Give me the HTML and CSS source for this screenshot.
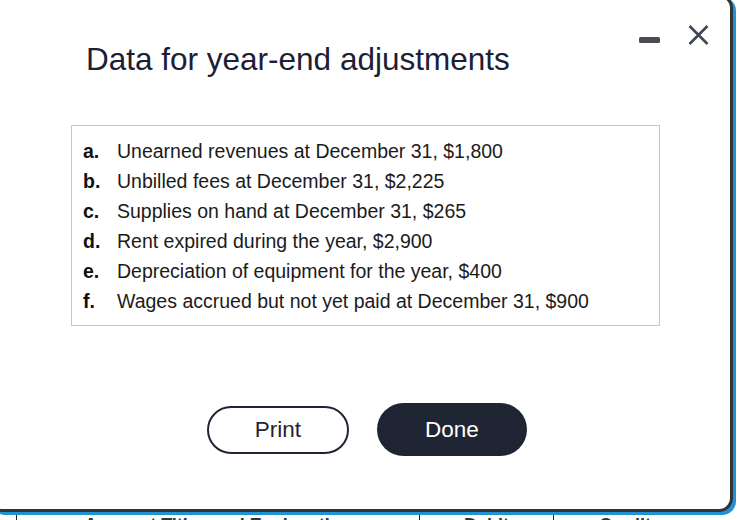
FILE: index.html
```html
<!DOCTYPE html>
<html lang="en">
<head>
<meta charset="utf-8">
<title>Data for year-end adjustments</title>
<link rel="stylesheet" href="styles.css">
</head>
<body>
<div class="dialog">
  <div class="header">
    <h1 class="title">Data for year-end adjustments</h1>
    <div class="controls">
      <button class="ctrl" aria-label="Minimize">
        <svg width="21" height="20" viewBox="0 0 21 20"><rect x="0" y="12" width="21" height="6" rx="1.5" fill="#4a4d52"/></svg>
      </button>
      <button class="ctrl" aria-label="Close">
        <svg width="21" height="20" viewBox="0 0 21 20"><path d="M1.5 1 L19.5 19 M19.5 1 L1.5 19" stroke="#3e4855" stroke-width="2.6" fill="none"/></svg>
      </button>
    </div>
  </div>
  <div class="data-box">
    <ol class="items">
      <li><span class="lbl">a.</span><span>Unearned revenues at December 31, $1,800</span></li>
      <li><span class="lbl">b.</span><span>Unbilled fees at December 31, $2,225</span></li>
      <li><span class="lbl">c.</span><span>Supplies on hand at December 31, $265</span></li>
      <li><span class="lbl">d.</span><span>Rent expired during the year, $2,900</span></li>
      <li><span class="lbl">e.</span><span>Depreciation of equipment for the year, $400</span></li>
      <li><span class="lbl">f.</span><span>Wages accrued but not yet paid at December 31, $900</span></li>
    </ol>
  </div>
  <div class="actions">
    <button class="btn btn-outline">Print</button>
    <button class="btn btn-primary">Done</button>
  </div>
</div>
<div class="table-head">
  <div class="th th-acct">Account Titles and Explanation</div>
  <div class="th th-debit">Debit</div>
  <div class="th th-credit">Credit</div>
</div>
</body>
</html>
```

FILE: styles.css
```css
html, body {
  margin: 0;
  padding: 0;
  background: #ffffff;
}
body {
  width: 742px;
  height: 520px;
  overflow: hidden;
  font-family: "Liberation Sans", Arial, sans-serif;
  color: #1b1b1b;
}
.dialog {
  box-sizing: border-box;
  width: 745px;
  height: 518px;
  margin: -6px 0 0 -12px;
  border: 3px solid #333436;
  border-radius: 14px;
  box-shadow: 3px 3px 0 #1f93d3;
  background: #ffffff;
}
.header {
  display: flex;
  justify-content: space-between;
  align-items: flex-start;
  padding: 28px 21px 0 95px;
}
.title {
  margin: 16px 0 0 0;
  font-size: 31.5px;
  line-height: 36px;
  font-weight: normal;
  color: #1b2036;
}
.controls {
  display: flex;
  gap: 28px;
}
.ctrl {
  display: block;
  padding: 0;
  margin: 0;
  border: 0;
  background: none;
  width: 21px;
  height: 20px;
}
.ctrl svg {
  display: block;
}
.data-box {
  box-sizing: border-box;
  width: 589px;
  margin: 48px 0 0 80px;
  border: 1px solid #c6c6c6;
  padding: 10px 0 9px 11px;
}
.items {
  list-style: none;
  margin: 0;
  padding: 0;
}
.items li {
  display: flex;
  font-size: 19.5px;
  line-height: 30px;
  color: #1b1b1b;
}
.lbl {
  width: 34px;
  flex: none;
  font-weight: bold;
  color: #111;
}
.actions {
  display: flex;
  align-items: center;
  gap: 28px;
  margin-top: 77px;
  padding-left: 216px;
}
.btn {
  box-sizing: border-box;
  font-family: "Liberation Sans", Arial, sans-serif;
  font-size: 22.5px;
  border-radius: 27px;
  padding: 0;
  display: flex;
  align-items: center;
  justify-content: center;
}
.btn-outline {
  width: 142px;
  height: 48px;
  border: 2.5px solid #1f2533;
  background: #ffffff;
  color: #1f2533;
}
.btn-primary {
  width: 150px;
  height: 53px;
  border: 0;
  background: #1f2533;
  color: #ffffff;
}
.table-head {
  display: flex;
  margin: 3px 0 0 16px;
}
.th {
  box-sizing: border-box;
  border-left: 1px solid #222;
  font-size: 18px;
  font-weight: bold;
  line-height: 20px;
  color: #333;
  text-align: center;
  height: 20px;
}
.th-acct { width: 403px; }
.th-debit { width: 134px; }
.th-credit { width: 143px; }
```
